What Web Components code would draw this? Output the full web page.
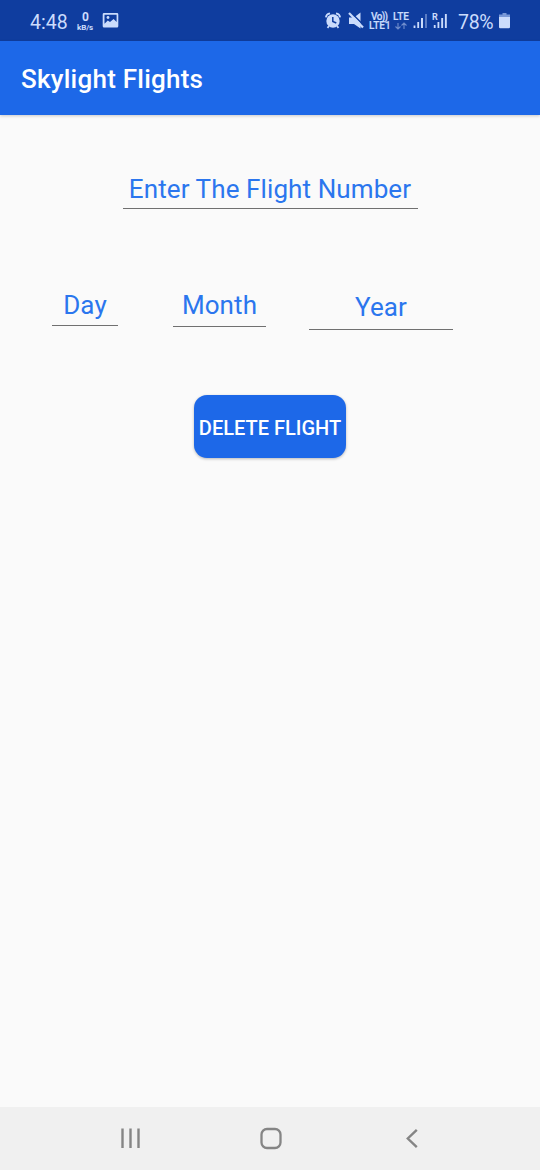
<!DOCTYPE html>
<html lang="en">
<head>
<meta charset="utf-8">
<title>Skylight Flights</title>
<style>
html,body{margin:0;height:100%;background:#fafafa;font-family:Roboto,"Noto Sans",sans-serif;overflow:hidden}
</style>
</head>
<body>
<flight-app></flight-app>
<script>
const define = (name, html) => customElements.define(name, class extends HTMLElement {
  constructor() {
    super();
    this.attachShadow({ mode: 'open' }).innerHTML = html;
  }
});

define('status-bar', `
<style>
:host{display:flex;box-sizing:border-box;height:41px;background:#0f3d9f;color:#cbdcfc;padding:0 29px 0 30px;justify-content:space-between}
.group{display:flex}
.clock,.battery{font-size:19.500px;line-height:45px}
.clock{width:47px}
.battery{width:41px;letter-spacing:-.3px}
.rate{width:25px;display:flex;flex-direction:column;padding-top:11px;box-sizing:border-box}
.rate b{width:17px;text-align:center;font-size:12px;line-height:12px;font-weight:700}
.rate small{font-size:8px;line-height:9px;font-weight:700;white-space:nowrap;letter-spacing:-.1px}
.net{font-size:10px;line-height:9px;font-weight:500;padding-top:12px;box-sizing:border-box;display:flex;flex-direction:column;white-space:nowrap;-webkit-text-stroke:.2px #cbdcfc}
.volte{width:24px}.lte{width:20px}
.net span{height:9px}
.net .vo{padding-left:2px;letter-spacing:-.6px}
.sig{width:19px}.roam{width:26px}
svg{display:block}
</style>
<div class="group">
  <span class="clock">4:48</span>
  <div class="rate"><b>0</b><small>kB/s</small></div>
  <svg width="18" height="41" viewBox="0 0 18 41"><path fill="#cbdcfc" fill-rule="evenodd" d="M2 13h13q1.300 0 1.300 1.300v11.700q0 1.500-1.300 1.500H2q-1.300 0-1.300-1.500V14.300Q.7 13 2 13zM2.500 14.800v9l3.300-3.300 2.200 1.600 3.600-3 3 3v-7.300z"/><circle cx="6" cy="17.500" r="1.400" fill="#cbdcfc"/></svg>
</div>
<div class="group">
  <svg width="44" height="41" viewBox="0 0 44 41" fill="#cbdcfc">
    <circle cx="8" cy="21" r="6.700"/><path d="M.9 17.300Q1.300 14 5 13.400M15.100 17.300Q14.700 14 11 13.400M4 26l-1.500 1.800M12 26l1.500 1.800" fill="none" stroke="#cbdcfc" stroke-width="1.800"/><path d="M7.800 17v4.500l3.500 1.500" fill="none" stroke="#0f3d9f" stroke-width="1.500"/>
    <path d="M24 17.500h5l6.500-5v16l-6.500-4.500H24z"/><path d="M25.500 12l13.500 13.500" stroke="#0f3d9f" stroke-width="1.500"/><path d="M24 13l14 14.500" stroke="#cbdcfc" stroke-width="2.200"/>
  </svg>
  <div class="net volte"><span class="vo">Vo))</span><span>LTE1</span></div>
  <div class="net lte"><span>LTE</span><svg width="16" height="9" viewBox="0 0 16 9" fill="none" stroke="#6f8dcc" stroke-width="1.100"><path d="M5 2v6M2.500 5.500L5 8l2.500-2.500M11 8V2M8.500 4.500L11 2l2.500 2.500"/></svg></div>
  <svg class="sig" height="41" viewBox="0 0 19 41" fill="#cbdcfc"><path d="M.6 25.500h1.800v2.500H.6zM4.300 22h1.800v6H4.300zM8 18h2v10H8z"/><path opacity=".4" d="M12 14h2v14h-2z"/></svg>
  <svg class="roam" height="41" viewBox="0 0 26 41" fill="#cbdcfc"><text x="0" y="19.500" font-size="9" font-weight="700">R</text><path d="M1.800 25h1.800v3H1.800zM5.500 22h1.800v6H5.500zM9.200 18h1.900v10H9.200zM12.900 14h1.900v14h-1.900z"/></svg>
  <span class="battery">78%</span>
  <svg width="12" height="41" viewBox="0 0 12 41"><path d="M3.500 13h4v1.500H11V18H0v-3.500h3.500z" fill="#7898d8"/><path d="M0 17h11v10q0 1.200-1.200 1.200H1.200Q0 28.200 0 27z" fill="#cbdcfc"/></svg>
</div>`);

define('app-bar', `
<style>:host{display:flex;align-items:center;height:74px;box-sizing:border-box;padding:1px 21px 0;background:#1d68e8;color:#fff;font-size:26px;line-height:30px;font-weight:500;letter-spacing:.24px;box-shadow:0 1px 3px #0003;position:relative}</style>
<span><slot></slot></span>`);

define('hint-field', `
<style>:host{display:block;box-sizing:border-box;text-align:center;font-size:26px;line-height:32px;letter-spacing:.1px;color:#2b76ee;border-bottom:1px solid #707070;white-space:nowrap}</style>
<slot></slot>`);

define('action-button', `
<style>:host{display:block}
button{display:block;width:152px;height:63px;border:0;border-radius:13px;padding:3px 0 0;margin:0 auto;background:#1d68e8;color:#fff;font:500 20px/24px Roboto,sans-serif;white-space:nowrap;box-shadow:0 1px 3px #0004}</style>
<button><slot></slot></button>`);

define('nav-bar', `
<style>:host{display:flex;height:63px;background:#f0f0f0;align-items:center;padding-left:120px}
svg{display:block;fill:none;stroke:#858585}</style>
<svg width="140" height="24" viewBox="0 0 140 24" stroke-width="2.400"><path d="M2.500 1.500v19.500M10.500 1.500v19.500M18.500 1.500v19.500"/></svg>
<svg width="145" height="24" viewBox="0 0 145 24" stroke-width="2.300"><rect x="1.500" y="2" width="19" height="19" rx="5.500"/></svg>
<svg width="14" height="24" viewBox="0 0 14 24" stroke-width="2.400"><path d="M11.800 2.800L2.800 11.500l9 8.700"/></svg>`);

define('flight-app', `
<style>
:host{display:flex;flex-direction:column;width:540px;height:1170px;background:#fafafa}
main{flex:1;padding-top:58px}
.number{width:295px;margin:0 auto;height:36px}
.date{display:flex;align-items:flex-start;padding:80px 0 0 52px;height:106px}
.day{width:66px;height:37px;margin-right:55px}
.month{width:93px;height:37px;margin:1px 43px 0 0;line-height:31px}
.year{width:144px;height:39px;margin-top:2px}
</style>
<status-bar></status-bar>
<app-bar>Skylight Flights</app-bar>
<main>
  <hint-field class="number">Enter The Flight Number</hint-field>
  <div class="date"><hint-field class="day">Day</hint-field><hint-field class="month">Month</hint-field><hint-field class="year">Year</hint-field></div>
  <action-button>DELETE FLIGHT</action-button>
</main>
<nav-bar></nav-bar>`);
</script>
</body>
</html>
